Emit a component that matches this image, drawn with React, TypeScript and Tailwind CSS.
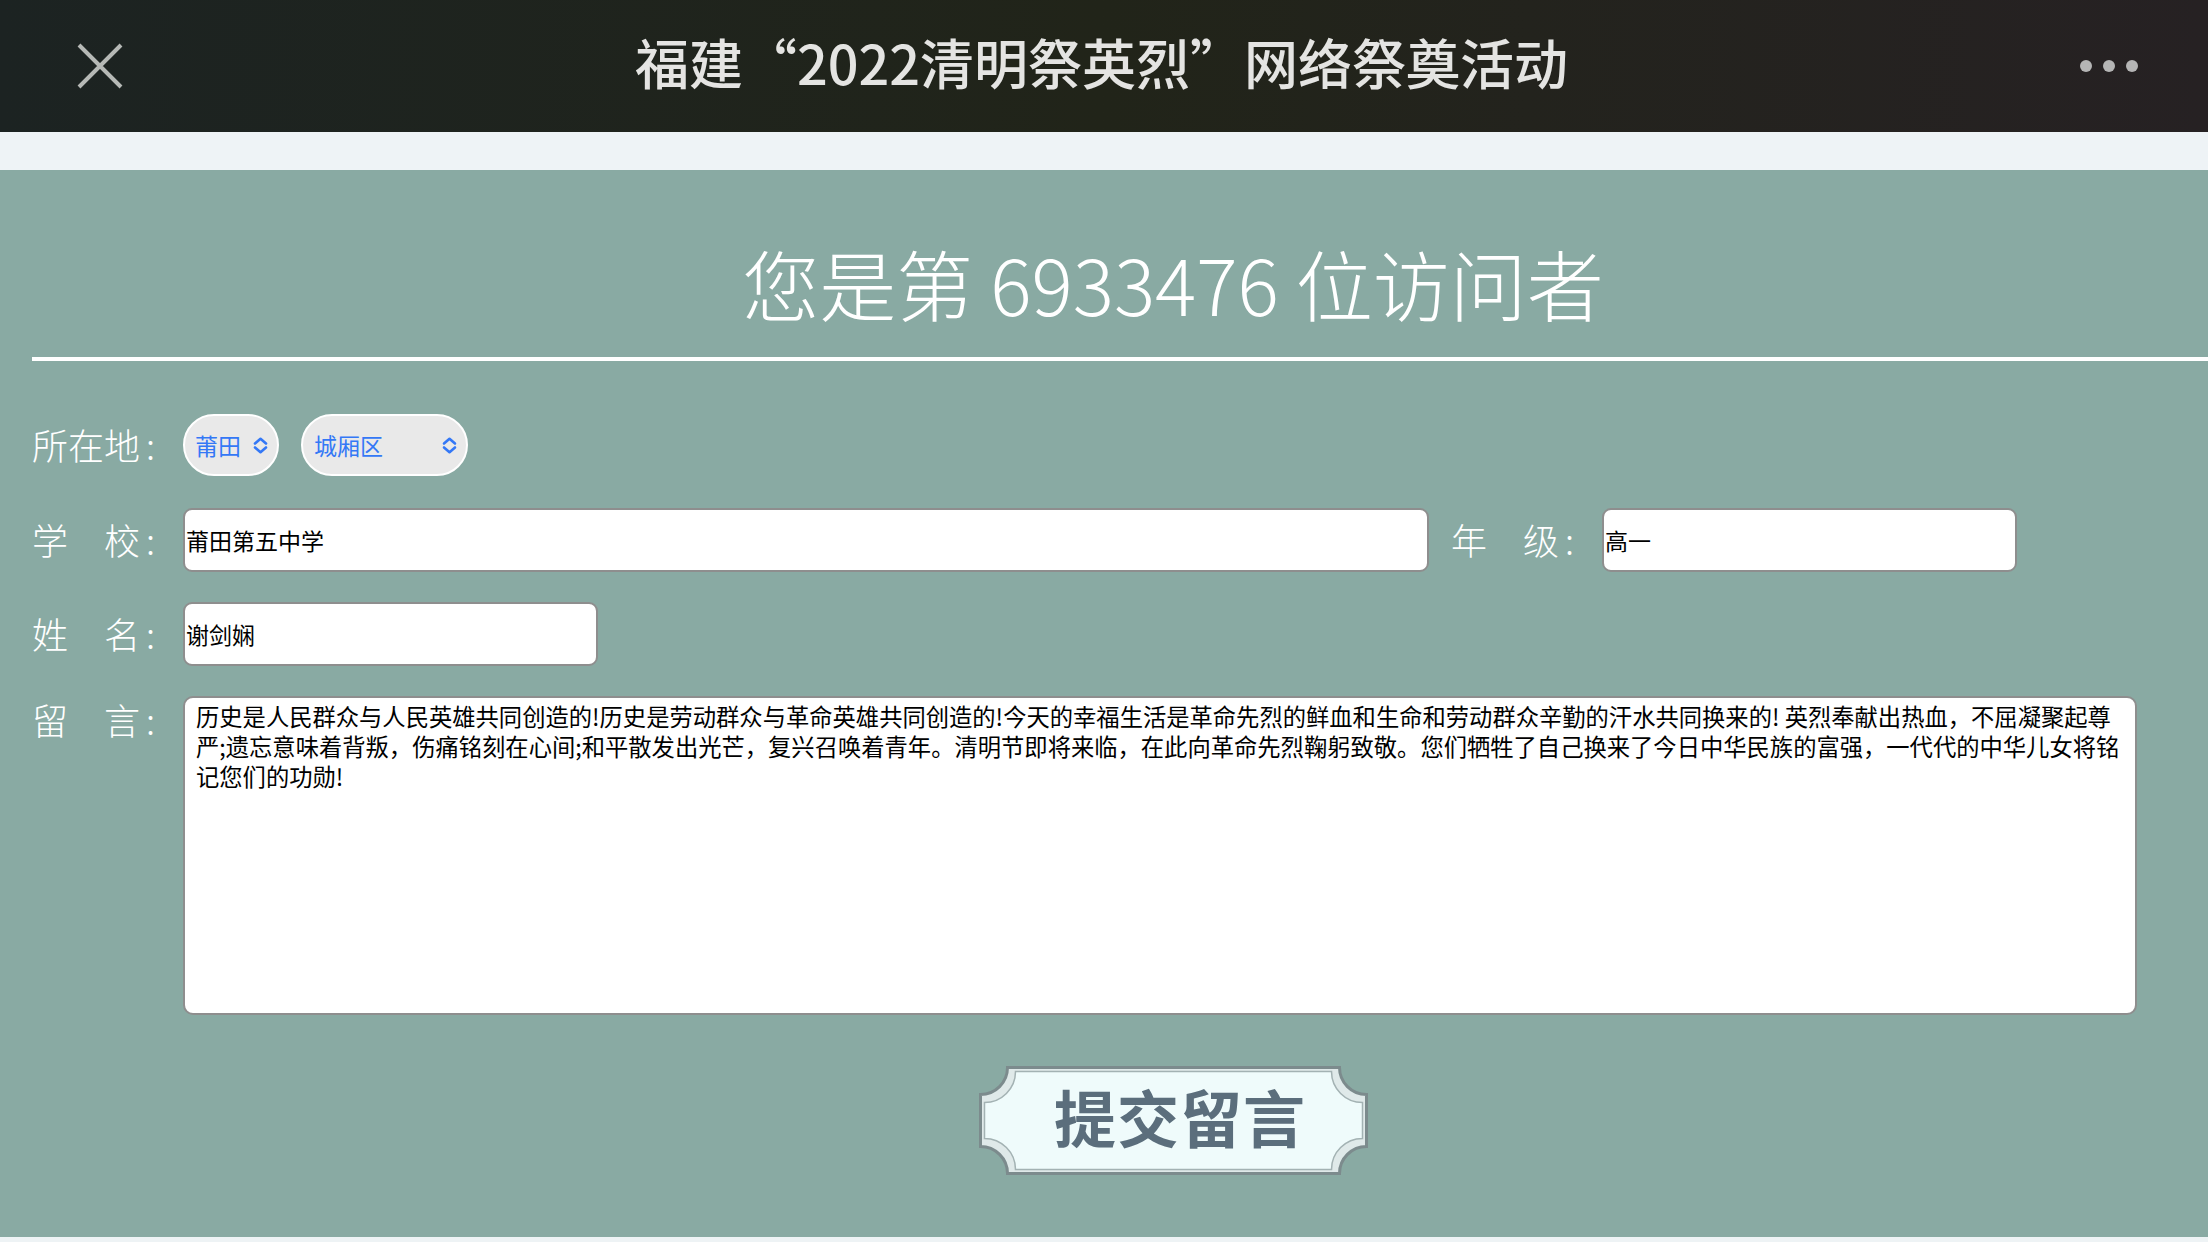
const CJK = "font-['Noto_Sans_CJK_SC','Noto_Sans',sans-serif]";

// path for a frame with concave (scooped) corners
const framePath = (i: number, r: number, w: number, h: number) =>
    `M${i + r},${i} H${w - i - r} A${r} ${r} 0 0 0 ${w - i},${i + r} V${h - i - r} A${r} ${r} 0 0 0 ${w - i - r},${h - i} H${i + r} A${r} ${r} 0 0 0 ${i},${h - i - r} V${i + r} A${r} ${r} 0 0 0 ${i + r},${i} Z`;

const Chevrons = () => (
    <svg width="15" height="17" viewBox="0 0 15 17" fill="none" stroke="#3478f6" strokeWidth="2.6" strokeLinecap="round" strokeLinejoin="round">
        <path d="M2 6.5 L7.5 1.8 L13 6.5" />
        <path d="M2 10.5 L7.5 15.2 L13 10.5" />
    </svg>
);

const Label = ({ text, className = "" }: { text: string; className?: string }) => (
    <div className={`w-[151px] shrink-0 pb-[3px] text-[36px] leading-[46px] font-light text-white ${className}`}>
        {text}
        <span className="ml-[6px]">:</span>
    </div>
);

export default function App() {
    const message =
        "历史是人民群众与人民英雄共同创造的!历史是劳动群众与革命英雄共同创造的!今天的幸福生活是革命先烈的鲜血和生命和劳动群众辛勤的汗水共同换来的! 英烈奉献出热血，不屈凝聚起尊严;遗忘意味着背叛，伤痛铭刻在心间;和平散发出光芒，复兴召唤着青年。清明节即将来临，在此向革命先烈鞠躬致敬。您们牺牲了自己换来了今日中华民族的富强，一代代的中华儿女将铭记您们的功勋!";

    const field = "h-[64px] bg-white rounded-[9px] border-2 border-[#8e8e8e] pl-[1px] text-[23px] text-black outline-none";

    return (
        <div className={`w-[2208px] h-[1242px] overflow-hidden bg-[#eef3f5] ${CJK}`}>
            {/* 顶部导航 */}
            <div className="h-[132px] flex items-center justify-between px-[77px] pr-[70px] bg-gradient-to-r from-[#1c2322] via-[#212419] to-[#262123]">
                <svg width="46" height="46" viewBox="0 0 46 46" stroke="#b6b9b6" strokeWidth="4">
                    <path d="M2 2 L44 44 M44 2 L2 44" />
                </svg>
                <h1 className="pb-[8px] text-[54px] leading-none font-medium text-[#e4e4e2]">福建“2022清明祭英烈”网络祭奠活动</h1>
                <div className="flex gap-[11px]">
                    <span className="w-[12px] h-[12px] rounded-full bg-[#b5b5b5]"></span>
                    <span className="w-[12px] h-[12px] rounded-full bg-[#b5b5b5]"></span>
                    <span className="w-[12px] h-[12px] rounded-full bg-[#b5b5b5]"></span>
                </div>
            </div>
            <div className="h-[38px] bg-[#eef3f6]"></div>

            {/* 主体 */}
            <div className="h-[1067px] bg-[#89aaa3]">
                <div className="ml-[32px] w-[2282px] flex flex-col">
                    <h2 className="pt-[74px] text-center text-[77px] leading-[77px] font-light text-white">您是第 6933476 位访问者</h2>
                    <div className="mt-[36px] h-[4px] bg-white"></div>

                    {/* 所在地 */}
                    <div className="mt-[53px] h-[62px] flex items-center">
                        <Label text="所在地" />
                        <div className="w-[96px] h-[62px] rounded-full bg-[#e9e9e9] border-2 border-white flex items-center justify-between pl-[10px] pr-[9px]">
                            <span className="text-[23px] text-[#3478f6]">莆田</span>
                            <Chevrons />
                        </div>
                        <div className="ml-[22px] w-[167px] h-[62px] rounded-full bg-[#e9e9e9] border-2 border-white flex items-center justify-between pl-[11px] pr-[9px]">
                            <span className="text-[23px] text-[#3478f6]">城厢区</span>
                            <Chevrons />
                        </div>
                    </div>

                    {/* 学校 / 年级 */}
                    <div className="mt-[32px] h-[64px] flex items-center">
                        <Label text="学　校" />
                        <input readOnly value="莆田第五中学" className={`w-[1246px] ${field}`} />
                        <Label text="年　级" className="ml-[22px]" />
                        <input readOnly value="高一" className={`w-[415px] ${field}`} />
                    </div>

                    {/* 姓名 */}
                    <div className="mt-[30px] h-[64px] flex items-center">
                        <Label text="姓　名" />
                        <input readOnly value="谢剑娴" className={`w-[415px] ${field}`} />
                    </div>

                    {/* 留言 */}
                    <div className="mt-[30px] flex items-start">
                        <Label text="留　言" />
                        <textarea
                            readOnly
                            value={message}
                            className="w-[1954px] h-[319px] bg-white rounded-[10px] border-2 border-[#8e8e8e] pt-[3px] pl-[11px] pr-[7px] text-[23.3px] leading-[30px] text-black resize-none overflow-hidden outline-none"
                        />
                    </div>

                    {/* 提交按钮 */}
                    <div className="mt-[51px] self-center relative w-[389px] h-[109px]">
                        <svg width="389" height="109" viewBox="0 0 389 109">
                            <path d={framePath(1.5, 27, 389, 109)} fill="#dfe9e9" stroke="#7c8b8d" strokeWidth="3" />
                            <path d={framePath(5.5, 31, 389, 109)} fill="#effbfb" stroke="#a3b2b3" strokeWidth="1.5" />
                        </svg>
                        <div className="absolute inset-0 flex items-center justify-center pl-[14px] pb-[9px] text-[62px] leading-none font-bold text-[#5b6e7c] tracking-[1px]">
                            提交留言
                        </div>
                    </div>
                </div>
            </div>
        </div>
    );
}
